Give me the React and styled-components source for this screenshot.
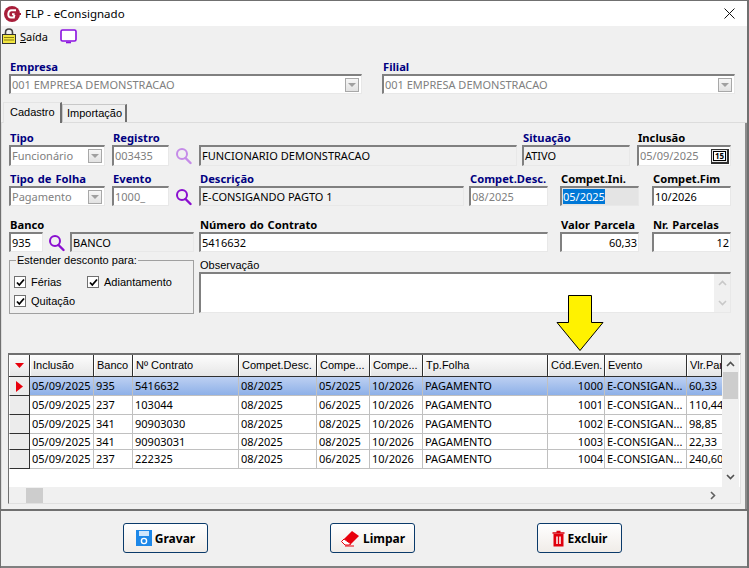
import styled, { createGlobalStyle } from "styled-components";

const GlobalStyle = createGlobalStyle`
  * { box-sizing: border-box; }
  html, body { margin: 0; padding: 0; background: #f0f0f0; }
  body { font-family: "Noto Sans", "DejaVu Sans", sans-serif; font-size: 11px; color: #000; }
`;

const COLS = "21px 64px 39px 106px 78px 53px 53px 125px 57px 82px 35px";
const UI_FONT = `"Liberation Sans", Arial, sans-serif`;

const headers = ["Inclusão", "Banco", "Nº Contrato", "Compet.Desc.", "Compe...", "Compe...", "Tp.Folha", "Cód.Even.", "Evento", "Vlr.Parcela"];

const rows = [
  { h: 19, inc: "05/09/2025", banco: "935", contrato: "5416632", desc: "08/2025", ini: "05/2025", fim: "10/2026", cod: "1000", valor: "60,33", active: true },
  { h: 19, inc: "05/09/2025", banco: "237", contrato: "103044", desc: "08/2025", ini: "06/2025", fim: "10/2026", cod: "1001", valor: "110,44" },
  { h: 19, inc: "05/09/2025", banco: "341", contrato: "90903030", desc: "08/2025", ini: "08/2025", fim: "10/2026", cod: "1002", valor: "98,85" },
  { h: 16, inc: "05/09/2025", banco: "341", contrato: "90903031", desc: "08/2025", ini: "08/2025", fim: "10/2026", cod: "1003", valor: "22,33" },
  { h: 19, inc: "05/09/2025", banco: "237", contrato: "222325", desc: "08/2025", ini: "06/2025", fim: "10/2026", cod: "1004", valor: "240,60" },
];

function Search({ light }) {
  const c = light ? "#c58be8" : "#8a0fd0";
  return (
    <SearchBox>
      <svg width="17" height="18" viewBox="0 0 17 18">
        <circle cx="7" cy="7" r="5" fill="none" stroke={c} strokeWidth="2" />
        <path d="M10.5 11 L15.5 16" stroke={c} strokeWidth="2.4" strokeLinecap="round" />
      </svg>
    </SearchBox>
  );
}

function SelectInput({ width, label, labelColor, value, h }) {
  return (
    <Field $w={width}>
      <Label $color={labelColor}>{label}</Label>
      <Sunken $h={h}>
        <InputText $color="#808080">{value}</InputText>
        <DropButton><DropArrow /></DropButton>
      </Sunken>
    </Field>
  );
}

function TextInput({ width, label, labelColor, value, bg, color, right, selected, h }) {
  return (
    <Field $w={width}>
      <Label $color={labelColor}>{label}</Label>
      <Sunken $bg={bg} $h={h}>
        <InputText $color={color} $right={right}>
          {selected ? <Selection>{value}</Selection> : value}
        </InputText>
      </Sunken>
    </Field>
  );
}

function Check({ label }) {
  return (
    <CheckLabel>
      <CheckBox>
        <svg width="9" height="9" viewBox="0 0 9 9">
          <path d="M1 4.5 L3.3 7 L8 1.5" fill="none" stroke="#000" strokeWidth="1.8" />
        </svg>
      </CheckBox>
      {label}
    </CheckLabel>
  );
}

export default function App() {
  return (
    <Window>
      <GlobalStyle />
      <TitleBar>
        <svg width="17" height="16" viewBox="0 0 17 16">
          <circle cx="8" cy="8" r="8" fill="#a81e3a" />
          <path d="M12 4.2 H7.5 Q4.6 4.2 4.3 8 Q4.2 11.5 7 11.5 H9.8 L10.6 8.2 H8" fill="none" stroke="#fff" strokeWidth="2" />
          <path d="M10.6 8 H17" stroke="#a81e3a" strokeWidth="2" />
        </svg>
        <TitleText>FLP - eConsignado</TitleText>
        <CloseIcon width="11" height="11" viewBox="0 0 11 11">
          <path d="M0.5 0.5 L10.5 10.5 M10.5 0.5 L0.5 10.5" stroke="#111" strokeWidth="1" />
        </CloseIcon>
      </TitleBar>

      <Toolbar>
        <svg width="14" height="16" viewBox="0 0 14 16">
          <path d="M3.5 7 V4.5 Q3.5 1 7 1 Q10.5 1 10.5 4.5 V7" fill="none" stroke="#444" strokeWidth="1.6" />
          <rect x="0.5" y="6.5" width="13" height="9" fill="#f2e640" stroke="#333" />
          <path d="M2 9.5 H12 M2 12 H12" stroke="#8a7f10" />
        </svg>
        <ToolText><u>S</u>aída</ToolText>
        <MonitorIcon width="17" height="15" viewBox="0 0 17 15">
          <rect x="1" y="1" width="15" height="11" rx="1.5" fill="#fff" stroke="#8a10e0" strokeWidth="1.6" />
          <path d="M6 13.5 H11" stroke="#8a10e0" strokeWidth="1.6" />
        </MonitorIcon>
      </Toolbar>

      <CompanyRow>
        <SelectInput width={353} label="Empresa" labelColor="#000080" value="001 EMPRESA DEMONSTRACAO" />
        <SelectInput width={353} label="Filial" labelColor="#000080" value="001 EMPRESA DEMONSTRACAO" />
      </CompanyRow>

      <Tabs>
        <ActiveTab>Cadastro</ActiveTab>
        <Tab>Importação</Tab>
      </Tabs>

      <Page>
        <FormRow>
          <SelectInput width={96} label="Tipo" labelColor="#000080" value="Funcionário" h={21} />
          <TextInput width={57} label="Registro" labelColor="#000080" value="003435" color="#808080" h={21} />
          <Search light />
          <NameField><TextInput width={318} label=" " value="FUNCIONARIO DEMONSTRACAO" bg="#f0f0f0" h={21} /></NameField>
          <TextInput width={108} label="Situação" labelColor="#000080" value="ATIVO" bg="#f0f0f0" h={21} />
          <Field $w={94}>
            <Label>Inclusão</Label>
            <Sunken $h={21}>
              <InputText $color="#808080">05/09/2025</InputText>
              <CalendarButton><CalendarText>15</CalendarText></CalendarButton>
            </Sunken>
          </Field>
        </FormRow>

        <FormRow>
          <SelectInput width={96} label="Tipo de Folha" labelColor="#000080" value="Pagamento" />
          <TextInput width={57} label="Evento" labelColor="#000080" value="1000_" color="#808080" />
          <Search />
          <NameField><TextInput width={265} label="Descrição" labelColor="#000080" value="E-CONSIGANDO PAGTO 1" bg="#f0f0f0" /></NameField>
          <TextInput width={79} label="Compet.Desc." labelColor="#000080" value="08/2025" color="#808080" />
          <WideField><TextInput width={79} label="Compet.Ini." value="05/2025" bg="#e4e4e4" selected /></WideField>
          <WideField $m={13}><TextInput width={79} label="Compet.Fim" value="10/2026" /></WideField>
        </FormRow>

        <BancoRow>
          <TextInput width={34} label="Banco" value="935" />
          <Search />
          <NameField><TextInput width={124} label=" " value="BANCO" bg="#f0f0f0" /></NameField>
          <TextInput width={349} label="Número do Contrato" value="5416632" />
          <WideField><TextInput width={79} label="Valor Parcela" value="60,33" right /></WideField>
          <WideField $m={13}><TextInput width={79} label="Nr. Parcelas" value="12" right /></WideField>
        </BancoRow>

        <ExtrasRow>
          <GroupBox>
            <Legend>Estender desconto para:</Legend>
            <CheckGrid>
              <Check label="Férias" />
              <Check label="Adiantamento" />
              <Check label="Quitação" />
            </CheckGrid>
          </GroupBox>
          <ObsField>
            <ObsLabel>Observação</ObsLabel>
            <ObsBox>
              <ObsScroll>
                <ScrollChevron width="9" height="6" viewBox="0 0 9 6"><path d="M1 5 L4.5 1.5 L8 5" fill="none" stroke="#c8c8c8" strokeWidth="1.6" /></ScrollChevron>
                <ScrollChevron width="9" height="6" viewBox="0 0 9 6"><path d="M1 1 L4.5 4.5 L8 1" fill="none" stroke="#c8c8c8" strokeWidth="1.6" /></ScrollChevron>
              </ObsScroll>
            </ObsBox>
          </ObsField>
        </ExtrasRow>

        <Arrow width="48" height="57" viewBox="0 0 48 57">
          <path d="M12.5 0.5 H35.5 V27.5 H47 L24 55.5 L1 27.5 H12.5 Z" fill="#fff200" stroke="#000" strokeWidth="1" />
        </Arrow>

        <Grid>
          <GridMain>
            <GridBody>
              <HeaderRow>
                <HeaderCorner>
                  <svg width="9" height="5" viewBox="0 0 9 5"><path d="M0 0 H9 L4.5 5 Z" fill="#e8000c" /></svg>
                </HeaderCorner>
                {headers.map((h, i) => (
                  <HeaderCell key={i}>{h}</HeaderCell>
                ))}
              </HeaderRow>
              {rows.map((r) => (
                <DataRow key={r.cod} $h={r.h} $active={r.active}>
                  <Indicator>
                    {r.active && (
                      <svg width="7" height="11" viewBox="0 0 7 11"><path d="M0 0 L7 5.5 L0 11 Z" fill="#e8000c" /></svg>
                    )}
                  </Indicator>
                  <Cell>{r.inc}</Cell>
                  <Cell>{r.banco}</Cell>
                  <Cell>{r.contrato}</Cell>
                  <Cell>{r.desc}</Cell>
                  <Cell>{r.ini}</Cell>
                  <Cell>{r.fim}</Cell>
                  <Cell>PAGAMENTO</Cell>
                  <Cell $right>{r.cod}</Cell>
                  <Cell>E-CONSIGAN...</Cell>
                  <Cell $clip>{r.valor}</Cell>
                </DataRow>
              ))}
            </GridBody>
            <VScroll>
              <ScrollChevron width="9" height="6" viewBox="0 0 9 6"><path d="M1 5 L4.5 1.5 L8 5" fill="none" stroke="#505050" strokeWidth="1.6" /></ScrollChevron>
              <VThumb />
              <VSpacer />
              <ScrollChevron width="9" height="6" viewBox="0 0 9 6"><path d="M1 1 L4.5 4.5 L8 1" fill="none" stroke="#505050" strokeWidth="1.6" /></ScrollChevron>
            </VScroll>
          </GridMain>
          <HScroll>
            <HThumb />
            <svg width="6" height="9" viewBox="0 0 6 9"><path d="M1 1 L4.5 4.5 L1 8" fill="none" stroke="#606060" strokeWidth="1.6" /></svg>
          </HScroll>
        </Grid>
      </Page>

      <Footer>
        <ActionButton>
          <svg width="16" height="16" viewBox="0 0 16 16">
            <path d="M0 0 H16 V16 H0 Z" fill="#1e88e8" />
            <rect x="3" y="1" width="10" height="5" fill="#cfe6fb" />
            <circle cx="8" cy="11" r="2.6" fill="none" stroke="#fff" strokeWidth="1.4" />
          </svg>
          Gravar
        </ActionButton>
        <ActionButton>
          <svg width="20" height="17" viewBox="0 0 20 17">
            <path d="M12 1 L19 6 L11 14 L4 9 Z" fill="#e8000c" />
            <path d="M4 9 L1.5 11.5 L5 15 H9 L11 14 Z" fill="#fff" stroke="#e8000c" />
            <path d="M5 16 H14" stroke="#e8000c" />
          </svg>
          Limpar
        </ActionButton>
        <ActionButton>
          <svg width="13" height="17" viewBox="0 0 13 17">
            <path d="M4.5 1.5 H8.5 M0.5 3 H12.5" stroke="#d8000c" strokeWidth="1.6" />
            <path d="M1.5 4 H11.5 V16.5 H1.5 Z" fill="#e0000c" />
            <path d="M5 6.5 V14 M8 6.5 V14" stroke="#fff" strokeWidth="1.5" />
          </svg>
          Excluir
        </ActionButton>
      </Footer>
    </Window>
  );
}

const Window = styled.div`
  position: relative;
  width: 749px;
  height: 568px;
  overflow: hidden;
  background: #f0f0f0;
  border-top: 1px solid #707070;
  border-left: 1px solid #707070;
  border-right: 2px solid #707070;
  display: flex;
  flex-direction: column;
`;

const TitleBar = styled.div`
  height: 25px;
  flex: none;
  background: #fff;
  display: flex;
  align-items: center;
  padding: 0 12px 0 3px;
`;

const TitleText = styled.span`
  margin-left: 4px;
  font-size: 11.5px;
`;

const CloseIcon = styled.svg`
  margin-left: auto;
`;

const Toolbar = styled.div`
  height: 23px;
  flex: none;
  display: flex;
  align-items: center;
  padding: 0 0 3px 1px;
`;

const ToolText = styled.span`
  margin-left: 4px;
  font-size: 11px;
`;

const MonitorIcon = styled.svg`
  margin-left: 12px;
`;

const CompanyRow = styled.div`
  flex: none;
  display: flex;
  gap: 13px;
  padding: 10px 0 0 8px;
  height: 54px;
`;

const Tabs = styled.div`
  flex: none;
  height: 20px;
  display: flex;
  align-items: flex-end;
  padding-left: 2px;
  border-bottom: 1px solid #dcdcdc;
`;

const Tab = styled.div`
  height: 18px;
  padding: 1px 4px 0;
  width: 65px;
  font-family: ${UI_FONT};
  font-size: 11px;
  line-height: 15px;
  white-space: nowrap;
  background: #f0f0f0;
  border: 1px solid #c8c8c8;
  border-right: 2px solid #707070;
  border-bottom: none;
`;

const ActiveTab = styled(Tab)`
  height: 21px;
  width: 59px;
  padding: 2px 6px;
  margin-bottom: -1px;
  border-color: #e4e4e4;
  border-right: 2px solid #707070;
  position: relative;
`;

const Page = styled.div`
  position: relative;
  flex: none;
  height: 386px;
  padding: 7px 0 0 7px;
  border-left: 1px solid #dcdcdc;
  border-right: 2px solid #8c8c8c;
  display: flex;
  flex-direction: column;
`;

const FormRow = styled.div`
  display: flex;
  height: 41px;
`;

const BancoRow = styled(FormRow)`
  margin-top: 5px;
`;

const Field = styled.div`
  width: ${(p) => p.$w}px;
  flex: none;
  display: flex;
  flex-direction: column;
  & + & { margin-left: 7px; }
`;

const NameField = styled.div`
  flex: none;
  margin-right: 5px;
`;

const WideField = styled.div`
  flex: none;
  margin-left: ${(p) => p.$m ?? 12}px;
`;

const Label = styled.label`
  height: 15px;
  line-height: 15px;
  padding-left: 1px;
  font-size: 11.2px;
  font-weight: 700;
  word-spacing: 1px;
  white-space: pre;
  color: ${(p) => p.$color || "#000"};
`;

const Sunken = styled.div`
  height: ${(p) => p.$h || 20}px;
  background: ${(p) => p.$bg || "#fff"};
  border-style: solid;
  border-width: 2px 1px 1px 2px;
  border-color: #808080 #e8e8e8 #e8e8e8 #808080;
  display: flex;
  align-items: center;
  position: relative;
`;

const InputText = styled.div`
  flex: 1;
  min-width: 0;
  padding: 0 1px;
  font-size: 11px;
  line-height: 16px;
  white-space: nowrap;
  overflow: hidden;
  color: ${(p) => p.$color || "#000"};
  text-align: ${(p) => (p.$right ? "right" : "left")};
`;

const Selection = styled.span`
  background: #0078d7;
  color: #fff;
`;

const DropButton = styled.div`
  width: 14px;
  height: 14px;
  flex: none;
  margin-right: 2px;
  background: linear-gradient(#f6f6f6, #e2e2e2);
  border: 1px solid #a8a8a8;
  display: flex;
  align-items: center;
  justify-content: center;
`;

const DropArrow = styled.div`
  width: 0;
  height: 0;
  border-left: 4px solid transparent;
  border-right: 4px solid transparent;
  border-top: 4px solid #a0a0a0;
`;

const CalendarButton = styled.div`
  width: 18px;
  height: 15px;
  flex: none;
  margin-right: 1px;
  background: #e8e8e8;
  border: 1px solid #303030;
  border-width: 1px 2px 2px 1px;
  display: flex;
  align-items: center;
  justify-content: center;
`;

const CalendarText = styled.span`
  background: #fff;
  border: 1px solid #000;
  font-size: 8px;
  line-height: 8px;
  font-weight: 700;
  padding: 0 1px;
`;

const SearchBox = styled.div`
  flex: none;
  width: 17px;
  height: 41px;
  margin: 0 7px 0 6px;
  padding-top: 17px;

  ${BancoRow} & {
    margin: 0 5px;
  }
`;

const ExtrasRow = styled.div`
  display: flex;
  height: 56px;
`;

const GroupBox = styled.fieldset`
  width: 185px;
  height: 59px;
  margin: -3px 0 0 0;
  padding: 0 0 0 4px;
  border: 1px solid #a0a0a0;
  flex: none;
`;

const Legend = styled.legend`
  padding: 0 1px;
  margin-left: 2px;
  font-family: ${UI_FONT};
  font-size: 11px;
  line-height: 11px;
`;

const CheckGrid = styled.div`
  display: grid;
  grid-template-columns: 73px auto;
  row-gap: 7px;
  padding-top: 10px;
`;

const CheckLabel = styled.div`
  display: flex;
  align-items: center;
  gap: 5px;
  height: 12px;
  font-family: ${UI_FONT};
  font-size: 11px;
`;

const CheckBox = styled.div`
  width: 12px;
  height: 12px;
  background: #fff;
  border: 1px solid #707070;
  display: flex;
  align-items: center;
  justify-content: center;
`;

const ObsField = styled.div`
  width: 532px;
  margin-left: 5px;
  display: flex;
  flex-direction: column;
`;

const ObsLabel = styled.div`
  height: 14px;
  line-height: 15px;
  font-family: ${UI_FONT};
  font-size: 11px;
  padding-left: 1px;
`;

const ObsBox = styled.div`
  height: 41px;
  background: #fff;
  border-style: solid;
  border-width: 2px 1px 1px 2px;
  border-color: #808080 #e8e8e8 #e8e8e8 #808080;
  display: flex;
  justify-content: flex-end;
`;

const ObsScroll = styled.div`
  width: 16px;
  background: #f0f0f0;
  display: flex;
  flex-direction: column;
  align-items: center;
  justify-content: space-between;
  padding: 6px 0;
`;

const ScrollChevron = styled.svg`
  flex: none;
`;

const Arrow = styled.svg`
  position: absolute;
  left: 554px;
  top: 172px;
`;

const Grid = styled.div`
  width: 733px;
  height: 151px;
  margin-top: 39px;
  margin-left: -1px;
  background: #fff;
  border-style: solid;
  border-width: 2px 1px 1px 1px;
  border-color: #707070 #e0e0e0 #e0e0e0 #707070;
  display: flex;
  flex-direction: column;
`;

const GridMain = styled.div`
  flex: 1;
  display: flex;
  min-height: 0;
`;

const GridBody = styled.div`
  width: 713px;
  flex: none;
  overflow: hidden;
`;

const HeaderRow = styled.div`
  display: grid;
  grid-template-columns: ${COLS};
  height: 22px;
  border-bottom: 1px solid #303030;
`;

const HeaderCell = styled.div`
  padding: 0 0 0 2px;
  font-family: ${UI_FONT};
  font-size: 11px;
  line-height: 21px;
  white-space: nowrap;
  overflow: hidden;
  background: linear-gradient(#fdfdfd, #e6e6e6);
  border-right: 1px solid #303030;
  border-left: 1px solid #fff;
`;

const HeaderCorner = styled(HeaderCell)`
  padding: 0;
  display: flex;
  align-items: center;
  justify-content: center;
`;

const DataRow = styled.div`
  display: grid;
  grid-template-columns: ${COLS};
  height: ${(p) => p.$h}px;
  border-bottom: 1px solid #c0c0c0;
  background: ${(p) => (p.$active ? "linear-gradient(#bdd0f2, #8db0e8)" : "#fff")};
`;

const Indicator = styled.div`
  background: #ececec;
  border-right: 1px solid #303030;
  border-bottom: 1px solid #303030;
  margin-bottom: -1px;
  border-left: 1px solid #fff;
  display: flex;
  align-items: center;
  justify-content: center;
`;

const Cell = styled.div`
  padding: 0 1px 0 2px;
  font-size: 11px;
  line-height: 14px;
  display: flex;
  align-items: center;
  justify-content: ${(p) => (p.$right ? "flex-end" : "flex-start")};
  white-space: nowrap;
  overflow: hidden;
  border-right: 1px solid #c0c0c0;
  ${(p) => p.$clip && "border-right: none;"}
`;

const VScroll = styled.div`
  width: 17px;
  flex: none;
  background: #f0f0f0;
  display: flex;
  flex-direction: column;
  align-items: center;
  padding: 6px 0 7px;
`;

const VThumb = styled.div`
  width: 15px;
  height: 27px;
  margin-top: 5px;
  background: #cdcdcd;
`;

const VSpacer = styled.div`
  flex: 1;
`;

const HScroll = styled.div`
  height: 16px;
  flex: none;
  background: #f0f0f0;
  display: flex;
  align-items: center;
  justify-content: space-between;
  padding: 0 24px 0 17px;
`;

const HThumb = styled.div`
  width: 17px;
  height: 15px;
  background: #cdcdcd;
`;

const Footer = styled.div`
  flex: 1;
  border-top: 2px solid #707070;
  border-bottom: 2px solid #808080;
  margin: 0 -2px 0 0;
  display: flex;
  gap: 122px;
  padding: 12px 0 0 122px;
`;

const ActionButton = styled.button`
  width: 85px;
  height: 30px;
  padding: 0;
  display: flex;
  align-items: center;
  justify-content: center;
  gap: 3px;
  font-family: "Noto Sans", sans-serif;
  font-size: 12px;
  font-weight: 700;
  color: #000;
  background: linear-gradient(#ffffff, #f0ece8);
  border: 1px solid #0a3a6a;
  border-radius: 3px;
`;
